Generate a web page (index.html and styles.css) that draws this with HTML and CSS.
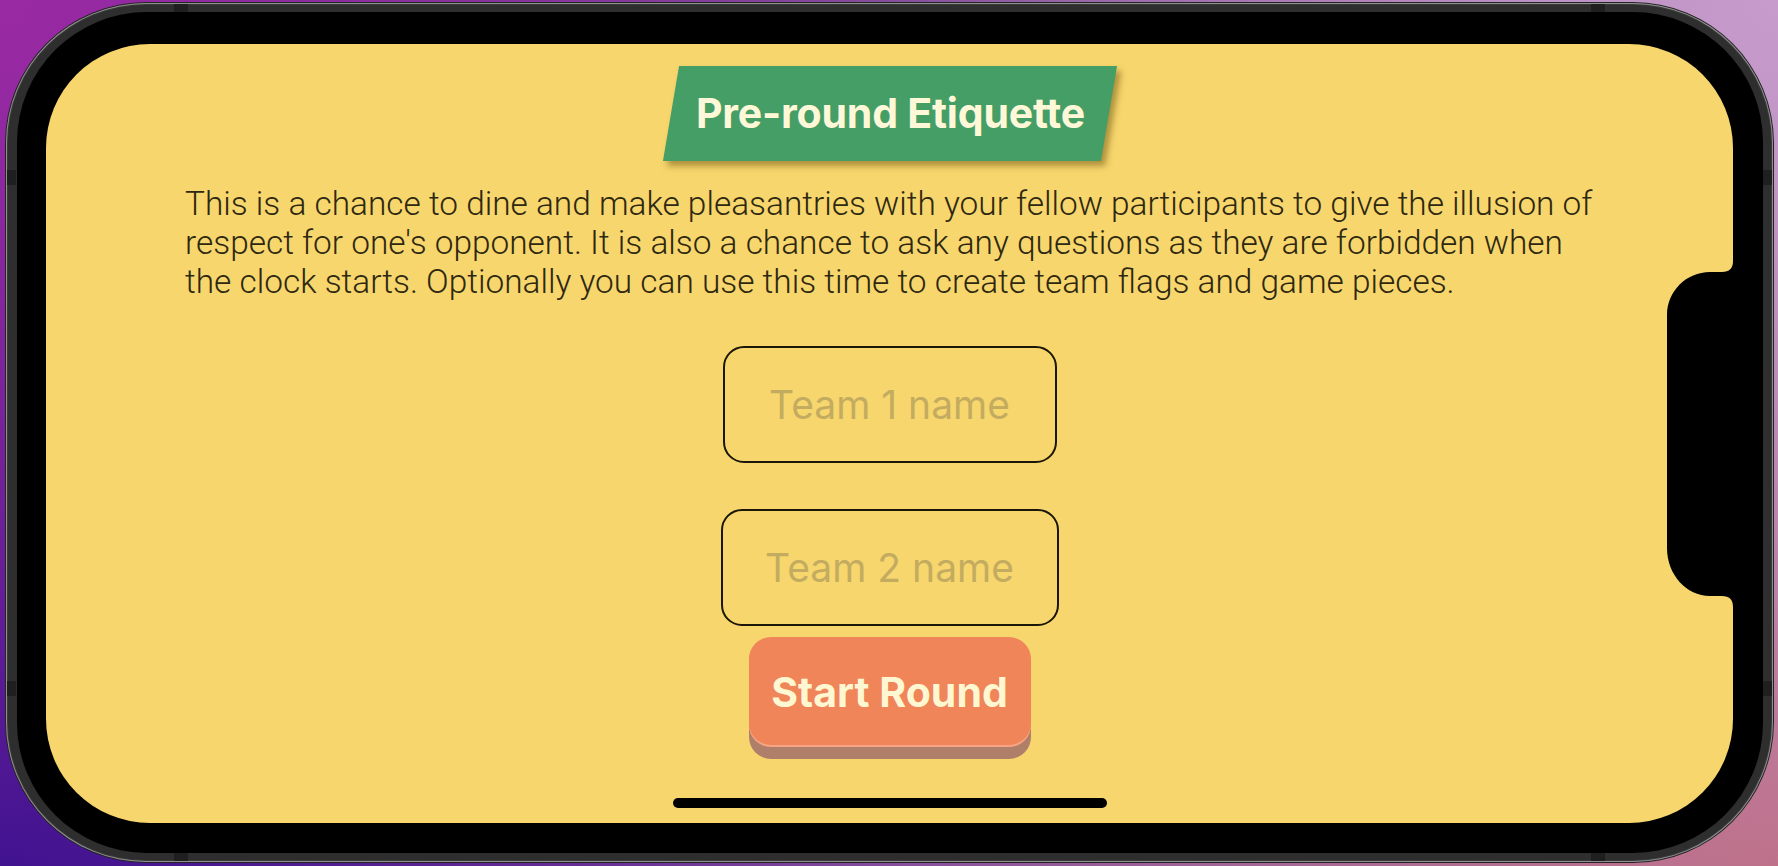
FILE: index.html
```html
<!DOCTYPE html>
<html lang="en">
<head>
<meta charset="utf-8">
<title>Pre-round Etiquette</title>
<link rel="stylesheet" href="styles.css">
</head>
<body>
<div class="phone">
  <span class="band band-t1"></span>
  <span class="band band-t2"></span>
  <span class="band band-b1"></span>
  <span class="band band-b2"></span>
  <span class="band band-l1"></span>
  <span class="band band-l2"></span>
  <span class="band band-r1"></span>
  <span class="band band-r2"></span>
  <div class="bezel">
    <main class="screen">
      <h1 class="banner"><span class="banner-text">Pre-round Etiquette</span></h1>
      <p class="intro">This is a chance to dine and make pleasantries with your fellow participants to give the illusion of respect for one's opponent. It is also a chance to ask any questions as they are forbidden when the clock starts. Optionally you can use this time to create team flags and game pieces.</p>
      <form class="teams">
        <input class="team-input team-one" type="text" placeholder="Team 1 name">
        <input class="team-input team-two" type="text" placeholder="Team 2 name">
        <button class="start" type="button">Start Round</button>
      </form>
      <svg class="notch" width="66" height="352" viewBox="0 0 66 352" aria-hidden="true">
        <path d="M66,3 Q66,14 55,14 L43,14 C19.3,14 0,33.3 0,57 L0,290 C0,316.5 19.3,338 43,338 L55,338 Q66,338 66,349 Z" fill="#000"/>
      </svg>
      <div class="home-indicator"></div>
    </main>
  </div>
</div>
</body>
</html>
```
FILE: styles.css
```css
html, body {
  margin: 0;
  padding: 0;
}

body {
  width: 1778px;
  height: 866px;
  overflow: hidden;
  background:
    radial-gradient(circle at 0% 0%, #9a2aa4 0%, rgba(154,42,164,0) 45%),
    radial-gradient(circle at 0% 100%, #3e1290 0%, rgba(62,18,144,0) 45%),
    radial-gradient(circle at 100% 0%, #c79ccd 0%, rgba(199,156,205,0) 45%),
    radial-gradient(circle at 100% 100%, #bf7088 0%, rgba(191,112,136,0) 45%),
    linear-gradient(to right, #6a2090, #a07aa8);
}

.phone {
  position: relative;
  box-sizing: border-box;
  width: 1767px;
  height: 859px;
  margin: 3px 0 0 6px;
  padding: 9px 10px 9px 11px;
  border-radius: 140px;
  background: #2e2e2e;
  box-shadow: 0 0 0 1px #242424, inset 0 0 0 1px #8f8f8f, inset 0 0 0 2px #3a3a3a;
}

.band {
  position: absolute;
  background: #1f1f1f;
}
.band-t1, .band-t2 { top: 1px; width: 14px; height: 8px; }
.band-b1, .band-b2 { bottom: 1px; width: 14px; height: 8px; }
.band-t1, .band-b1 { left: 168px; }
.band-t2, .band-b2 { left: 1585px; }
.band-l1, .band-l2 { left: 1px; width: 9px; height: 15px; }
.band-r1, .band-r2 { right: 1px; width: 9px; height: 15px; }
.band-l1, .band-r1 { top: 167px; }
.band-l2, .band-r2 { top: 678px; }

.bezel {
  box-sizing: border-box;
  height: 100%;
  padding: 32px 30px 30px 29px;
  border-radius: 130px;
  background: #000;
}

.screen {
  position: relative;
  box-sizing: border-box;
  height: 100%;
  border-radius: 104px;
  background: #f7d66d;
  display: flex;
  flex-direction: column;
  align-items: center;
  padding-top: 22px;
}

.banner {
  margin: 0;
  box-sizing: border-box;
  width: 438px;
  height: 95px;
  display: flex;
  align-items: center;
  justify-content: center;
  background: #469e67;
  transform: skewX(-9.6deg);
  box-shadow: 5px 5px 6px rgba(112, 88, 20, 0.55);
}

.banner-text {
  display: block;
  transform: skewX(9.6deg);
  font-family: Inter, "Noto Sans", sans-serif;
  font-weight: 700;
  font-size: 41px;
  line-height: 1;
  color: #fff8d8;
  letter-spacing: -0.2px;
}

.intro {
  box-sizing: border-box;
  align-self: stretch;
  margin: 24px 0 0;
  padding: 0 126px 0 139px;
  font-family: Roboto, "Noto Sans", sans-serif;
  font-weight: 300;
  font-size: 33.4px;
  line-height: 38.8px;
  color: #2e2810;
}

.teams {
  display: flex;
  flex-direction: column;
  align-items: center;
  margin-top: 45px;
}

.team-input {
  box-sizing: border-box;
  height: 117px;
  margin: 0;
  padding: 0 20px;
  border: 2px solid #1a1608;
  border-radius: 21px;
  background: transparent;
  text-align: center;
  font-family: Inter, "Noto Sans", sans-serif;
  font-size: 39px;
  color: #2e2810;
  outline: none;
}
.team-input::placeholder {
  color: #c3ac60;
  opacity: 1;
}

.team-one {
  width: 334px;
}
.team-two {
  width: 338px;
  margin-top: 46px;
}

.start {
  box-sizing: border-box;
  width: 282px;
  height: 110px;
  margin: 11px 0 0;
  padding: 0;
  border: none;
  border-radius: 22px;
  background: #ef8559;
  box-shadow: inset 0 -2px 0 #f5a585, 0 12px 0 #b07f6a;
  font-family: Inter, "Noto Sans", sans-serif;
  font-weight: 700;
  font-size: 41px;
  color: #fff7d2;
  cursor: pointer;
}

.notch {
  position: absolute;
  right: 0;
  top: 214px;
}

.home-indicator {
  position: absolute;
  left: 627px;
  top: 754px;
  width: 434px;
  height: 10px;
  border-radius: 5px;
  background: #000;
}
```
